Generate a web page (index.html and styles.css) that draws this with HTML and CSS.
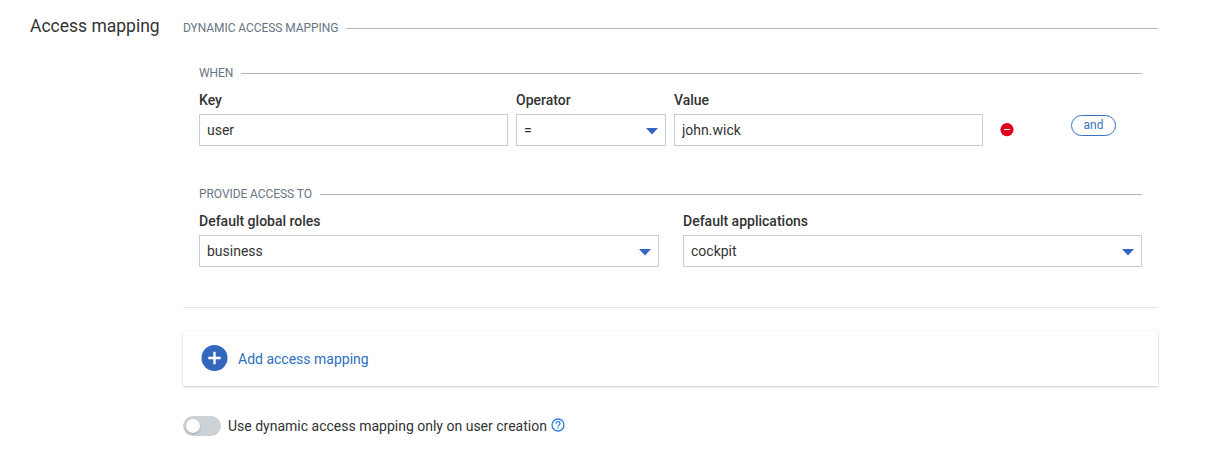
FILE: index.html
```html
<!DOCTYPE html>
<html lang="en">
<head>
<meta charset="utf-8">
<title>Access mapping</title>
<link rel="stylesheet" href="styles.css">
</head>
<body>
<div class="page">
  <h1 class="page-title">Access mapping</h1>
  <main class="content">
    <section class="mapping">
      <div class="legend"><span>DYNAMIC ACCESS MAPPING</span></div>
      <div class="rules">
        <div class="legend"><span>WHEN</span></div>
        <div class="when-row">
          <label class="field">Key<input class="control" type="text" value="user"></label>
          <div class="field">Operator
            <div class="control select operator">=<svg class="caret" viewBox="0 0 12 7"><path d="M0 0h12L6 6.5z"/></svg></div>
          </div>
          <label class="field">Value<input class="control" type="text" value="john.wick"></label>
          <svg class="remove" viewBox="0 0 14 14"><circle cx="7" cy="6.6" r="6.6" fill="#e0001b"/><path d="M4 6.5h6" stroke="#fff" stroke-width="1.1"/></svg>
          <button class="and-button" type="button">and</button>
        </div>
        <div class="legend provide"><span>PROVIDE ACCESS TO</span></div>
        <div class="access-row">
          <div class="field">Default global roles
            <div class="control select">business<svg class="caret" viewBox="0 0 12 7"><path d="M0 0h12L6 6.5z"/></svg></div>
          </div>
          <div class="field">Default applications
            <div class="control select">cockpit<svg class="caret" viewBox="0 0 12 7"><path d="M0 0h12L6 6.5z"/></svg></div>
          </div>
        </div>
      </div>
    </section>
    <div class="add-card">
      <svg class="add-icon" viewBox="0 0 26 26"><circle cx="13" cy="13" r="13" fill="#3366bd"/><path d="M13 6.8v12.4M6.8 13h12.4" stroke="#fff" stroke-width="2.4"/></svg>
      <span>Add access mapping</span>
    </div>
    <div class="toggle-row">
      <span class="toggle"><span class="knob"></span></span>
      <span class="toggle-label">Use dynamic access mapping only on user creation</span>
      <svg class="help" viewBox="0 0 14 14" fill="none" stroke="#2f7de1"><circle cx="7" cy="7" r="6" stroke-width="1.3"/><path d="M5 5.7C5 4.4 5.8 3.7 7 3.7s2 .7 2 1.8c0 1.4-2 1.5-2 2.9" stroke-width="1.2"/><path d="M7 9.4v1.3" stroke-width="1.3"/></svg>
    </div>
  </main>
</div>
</body>
</html>
```
FILE: styles.css
```css
* { box-sizing: border-box; }
body {
  margin: 0;
  background: #fff;
  color: #333;
  font: 14px/20px Roboto, sans-serif;
}
.page {
  display: grid;
  grid-template-columns: 153px 975px;
  padding: 20px 0 0 30px;
}
.page-title {
  margin: -6px 0 0;
  font-size: 17.5px;
  font-weight: 400;
  line-height: 24px;
  white-space: nowrap;
}
.mapping {
  height: 288px;
  border-bottom: 1px solid #e3e5e6;
}
.legend {
  display: flex;
  align-items: center;
  gap: 8px;
  height: 16px;
  color: #687684;
  font-size: 12px;
  letter-spacing: -0.07px;
  line-height: 16px;
}
.legend::after {
  content: "";
  flex: 1;
  height: 1px;
  background: #b0b8bb;
}
.rules { padding: 29px 16px 0; }
.provide { margin-top: 40px; }
.when-row {
  display: grid;
  grid-template-columns: 309px 150px 309px 14px 45px;
  column-gap: 8px;
  margin-top: 9px;
}
.access-row {
  display: grid;
  grid-template-columns: 460px 459px;
  gap: 24px;
  margin-top: 9px;
}
.field {
  display: block;
  font-weight: 500;
}
.control {
  display: flex;
  align-items: center;
  justify-content: space-between;
  width: 100%;
  height: 32px;
  margin: 4px 0 0;
  padding: 0 7px;
  border: 1px solid #c8cece;
  border-radius: 0;
  background: #fff;
  color: #333;
  font: 400 14px/20px Roboto, sans-serif;
}
.caret {
  width: 12px;
  height: 7px;
  margin-top: 3px;
  fill: #3366c4;
}
.remove {
  width: 14px;
  height: 14px;
  margin: 33px 0 0 9px;
}
.and-button {
  width: 45px;
  height: 21px;
  margin: 25px 0 0 58px;
  padding: 0 0 1px;
  border: 1px solid #3873bd;
  border-radius: 11px;
  background: #fff;
  color: #3873bd;
  font: 12px/18px Roboto, sans-serif;
}
.add-card {
  display: flex;
  align-items: center;
  gap: 10px;
  height: 55px;
  margin-top: 23px;
  padding-left: 18px;
  box-shadow: 0 1px 2px rgba(0, 0, 0, .2), 0 0 1px rgba(0, 0, 0, .12);
  color: #2e70c0;
}
.add-icon { width: 27px; height: 26px; margin-top: -1px; }
.toggle-row {
  display: flex;
  align-items: center;
  height: 20px;
  margin-top: 30px;
}
.toggle {
  width: 38px;
  height: 20px;
  padding: 3px;
  border-radius: 10px;
  background: #cbd1d5;
}
.knob {
  display: block;
  width: 14px;
  height: 14px;
  border-radius: 50%;
  background: #fff;
  box-shadow: 0 1px 2px rgba(0, 0, 0, .25);
}
.toggle-label { margin-left: 7px; }
.help {
  width: 14px;
  height: 14px;
  margin: -3px 0 0 4px;
}
```
